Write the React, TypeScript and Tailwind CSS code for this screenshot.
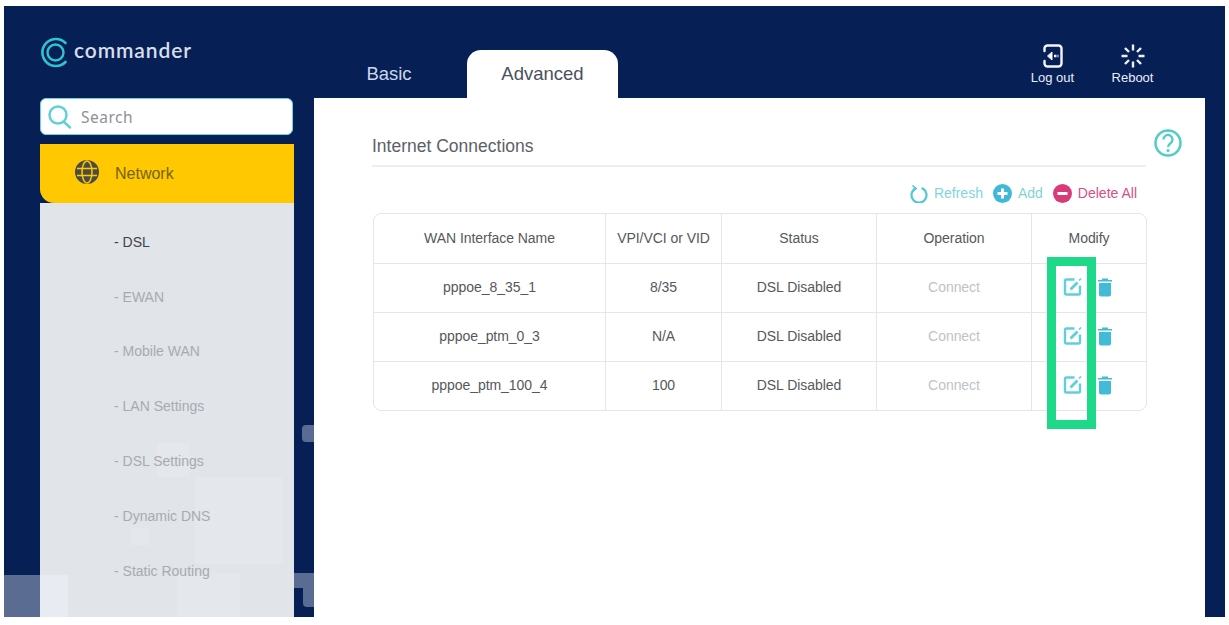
const font = { sans: "font-['Liberation_Sans',Arial,sans-serif]" };

const navItems = [
  { label: "- DSL", active: true },
  { label: "- EWAN" },
  { label: "- Mobile WAN" },
  { label: "- LAN Settings" },
  { label: "- DSL Settings" },
  { label: "- Dynamic DNS" },
  { label: "- Static Routing" },
];

const rows = [
  { name: "pppoe_8_35_1", vid: "8/35" },
  { name: "pppoe_ptm_0_3", vid: "N/A" },
  { name: "pppoe_ptm_100_4", vid: "100" },
];

const cols = "grid grid-cols-[231px_116px_155px_155px_minmax(0,1fr)]";

function EditIcon() {
  return (
    <svg width="20" height="20" viewBox="0 0 20 20" fill="none">
      <path d="M11.500 2.500H3.500a1.500 1.500 0 0 0-1.500 1.500v12a1.500 1.500 0 0 0 1.500 1.500h12a1.500 1.500 0 0 0 1.500-1.500V8.500" stroke="#5fcfdc" strokeWidth="2.400" />
      <path d="M7.500 12.500 14.500 5.500" stroke="#5fcfdc" strokeWidth="2.800" />
      <path d="M16 3.500 18 1.500" stroke="#5fcfdc" strokeWidth="1.600" />
    </svg>
  );
}

function TrashIcon() {
  return (
    <svg width="16" height="20" viewBox="0 0 16 20" fill="#42bcd6">
      <path d="M1 3h14v1.500H1zM5 1.500h6V3H5z" />
      <path d="M2 6h12v11.500a2 2 0 0 1-2 2H4a2 2 0 0 1-2-2z" />
    </svg>
  );
}

function Logo() {
  return (
    <svg width="30" height="31" viewBox="0 0 30 31" fill="none" stroke="#2fc3d2">
      <path d="M25.500 6A13.500 13.500 0 1 0 25.500 25" strokeWidth="2.600" strokeLinecap="round" />
      <circle cx="15.500" cy="15.500" r="8" strokeWidth="2.400" />
    </svg>
  );
}

function GlobeIcon() {
  return (
    <svg width="24" height="24" viewBox="0 0 24 24">
      <circle cx="12" cy="12" r="12" fill="#4b4d45" />
      <g stroke="#ffc800" strokeWidth="1.500" fill="none">
        <path d="M2 8.500h20M2 15.500h20" />
        <ellipse cx="12" cy="12" rx="5" ry="11" />
      </g>
    </svg>
  );
}

function LogoutIcon() {
  return (
    <svg width="22" height="24" viewBox="0 0 22 24" fill="none" stroke="#f4f6fb" strokeWidth="2.400">
      <path d="M2.500 7V4.500a3 3 0 0 1 3-3h11a3 3 0 0 1 3 3v15a3 3 0 0 1-3 3h-11a3 3 0 0 1-3-3V17" strokeLinecap="round" />
      <path d="M12 12h2.500M15.500 12h1" />
      <path d="M10 8 5.500 12l4.500 4z" fill="#f4f6fb" strokeWidth="1" />
    </svg>
  );
}

function RebootIcon() {
  return (
    <svg width="24" height="24" viewBox="0 0 24 24" fill="none" stroke="#eef1f8" strokeWidth="2.400">
      <path d="M12 0.500v6M12 17.500v6M0.500 12h6M17.500 12h6M4 4l4 4M16 16l4 4M20 4l-4 4M8 16l-4 4" />
    </svg>
  );
}

export default function App() {
  return (
    <div className={`h-[625px] w-[1229px] overflow-hidden bg-white pb-2 pl-1 pr-1 pt-1.5 ${font.sans}`}>
      <div className="relative flex h-full overflow-hidden bg-[#062056]">
        {/* faded squares of the backdrop */}
        <div className="absolute bottom-0 left-0 h-[42px] w-[36px] bg-[#5a6c92]" />
        <div className="absolute left-[298px] top-[419px] h-[17px] w-[12px] rounded-l-sm bg-[#5a6c92]" />
        <div className="absolute left-[290px] top-[567px] h-[15px] w-[20px] bg-[#5a6c92]" />
        <div className="absolute left-[299px] top-[582px] h-[19px] w-[11px] rounded-bl-sm bg-[#5a6c92]" />

        <aside className="relative ml-9 flex w-[254px] shrink-0 flex-col">
          <div className="flex h-[92px] items-start pt-[31px]">
            <Logo />
            <span className="ml-[4px] mt-[0px] font-['Lato',sans-serif] text-[21px] font-semibold leading-[26px] tracking-[0.9px] text-[#d8deea]">
              commander
            </span>
          </div>
          <div className="flex h-[37px] w-[253px] items-center rounded-[6px] border border-[#6fd3dc] bg-white pl-[6px]">
            <svg width="26" height="26" viewBox="0 0 26 26" fill="none" stroke="#62d0d6" strokeWidth="2.500">
              <circle cx="11" cy="11" r="8.500" />
              <path d="m17 18 6 5.500" strokeLinecap="round" />
            </svg>
            <span className="ml-[8px] mt-[2px] font-['Noto_Sans',sans-serif] text-[15.500px] tracking-[0.5px] text-[#8f9196]">Search</span>
          </div>
          <div className="mt-[9px] flex h-[59px] items-center rounded-bl-[14px] bg-[#ffc800] pb-[3px] pl-[35px]">
            <GlobeIcon />
            <span className="ml-[16px] mt-[4px] text-[16px] text-[#75630f]">Network</span>
          </div>
          <nav className="relative flex-1 overflow-hidden bg-[#e1e4e9] pl-[74px] pt-[12px]">
            <div className="absolute left-[117px] top-[240px] h-[34px] w-[33px] rounded-sm bg-[#e4e7eb]" />
            <div className="absolute left-[155px] top-[274px] h-[87px] w-[88px] rounded-sm bg-[#e4e7eb]" />
            <div className="absolute left-[90px] top-[325px] h-[17px] w-[20px] bg-[#e4e7eb]" />
            <div className="absolute left-[137px] top-[370px] h-[47px] w-[63px] bg-[#e4e7eb]" />
            <div className="absolute bottom-0 left-0 h-[42px] w-[28px] bg-[#e8ebf1]" />
            {navItems.map((item) => (
              <div
                key={item.label}
                className={`relative flex h-[54.800px] items-center text-[14px] ${item.active ? "text-[#3f4248]" : "text-[#a7abb1]"}`}
              >
                {item.label}
              </div>
            ))}
          </nav>
        </aside>

        <div className="ml-[20px] flex w-[891px] shrink-0 flex-col">
          <div className="flex h-[92px] items-end">
            <div className="flex h-[48px] w-[153px] items-center justify-center text-[18.500px] text-[#ccd6ea]">
              <span className="-ml-[3px]">Basic</span>
            </div>
            <div className="flex h-[48px] w-[151px] items-center justify-center rounded-t-[14px] bg-white text-[18.500px] text-[#4b5060]">
              Advanced
            </div>
            <div className="ml-auto flex h-full items-start gap-[35px] pr-[50px] pt-[38px] text-[13px] text-[#e9edf5]">
              <div className="flex w-[45px] flex-col items-center">
                <LogoutIcon />
                <span>Log out</span>
              </div>
              <div className="flex w-[45px] flex-col items-center">
                <RebootIcon />
                <span>Reboot</span>
              </div>
            </div>
          </div>

          <main className="relative flex-1 bg-white pl-[59px] pr-[58px] pt-[37px]">
            <div className="-ml-[1px] mr-[1px] border-b-2 border-[#eceef0] pb-[8px] text-[17.500px] leading-[22px] text-[#5d6166]">
              Internet Connections
            </div>
            <svg className="absolute left-[840px] top-[31px]" width="28" height="28" viewBox="0 0 28 28" fill="none">
              <circle cx="14" cy="14" r="12.500" stroke="#50cdc7" strokeWidth="2.500" />
              <path d="M9.500 10.500a4.500 4.500 0 1 1 7 3.700c-1.600 1.100-2.500 1.800-2.500 3.800" stroke="#50cdc7" strokeWidth="2.300" />
              <circle cx="14" cy="21.500" r="1.500" fill="#50cdc7" />
            </svg>
            <div className="mt-[16px] flex h-[21px] items-center justify-end pr-[10px] text-[14px]">
              <svg width="18" height="19" viewBox="0 0 18 19" fill="none" stroke="#50c8d8" strokeWidth="2.200">
                <path d="M5.500 4.500a7.500 7.500 0 1 0 7 0" strokeLinecap="round" />
                <path d="M2.500 1.500 6 4.500 3 7.500" strokeWidth="1.600" />
              </svg>
              <span className="ml-[6px] text-[#7fd5de]">Refresh</span>
              <svg className="ml-[10px]" width="19" height="19" viewBox="0 0 19 19">
                <circle cx="9.500" cy="9.500" r="9.500" fill="#3fb9d8" />
                <path d="M9.500 4.500v10M4.500 9.500h10" stroke="#fff" strokeWidth="3" />
              </svg>
              <span className="ml-[6px] text-[#7fd5ce]">Add</span>
              <svg className="ml-[10px]" width="19" height="19" viewBox="0 0 19 19">
                <circle cx="9.500" cy="9.500" r="9.500" fill="#d93a78" />
                <path d="M4.500 9.500h10" stroke="#fff" strokeWidth="3" />
              </svg>
              <span className="ml-[6px] text-[#d44f86]">Delete All</span>
            </div>

            <div className="mt-[9px] overflow-hidden rounded-[8px] border border-[#e4e6e8] text-[14px] tracking-[-0.05px] text-[#55585c]">
              <div className={`${cols} h-[49px] items-stretch`}>
                {["WAN Interface Name", "VPI/VCI or VID", "Status", "Operation", "Modify"].map((head, i) => (
                  <div key={head} className={`flex items-center justify-center ${i > 0 ? "border-l border-[#e4e6e8]" : ""}`}>
                    {head}
                  </div>
                ))}
              </div>
              {rows.map((row) => (
                <div key={row.name} className={`${cols} h-[49px] border-t border-[#e4e6e8]`}>
                  <div className="flex items-center justify-center pb-[2px]">{row.name}</div>
                  <div className="flex items-center justify-center border-l border-[#e4e6e8] pb-[2px]">{row.vid}</div>
                  <div className="flex items-center justify-center border-l border-[#e4e6e8] pb-[2px]">DSL Disabled</div>
                  <div className="flex items-center justify-center border-l border-[#e4e6e8] pb-[2px] text-[#c0c3c6]">Connect</div>
                  <div className="flex items-center gap-[14px] border-l border-[#e4e6e8] pb-[2px] pl-[31px]">
                    <EditIcon />
                    <TrashIcon />
                  </div>
                </div>
              ))}
            </div>

            {/* annotation drawn over the screenshot */}
            <div className="absolute left-[733px] top-[159px] h-[172px] w-[49px] border-[9px] border-[#1fd98a]" />
          </main>
        </div>
      </div>
    </div>
  );
}
